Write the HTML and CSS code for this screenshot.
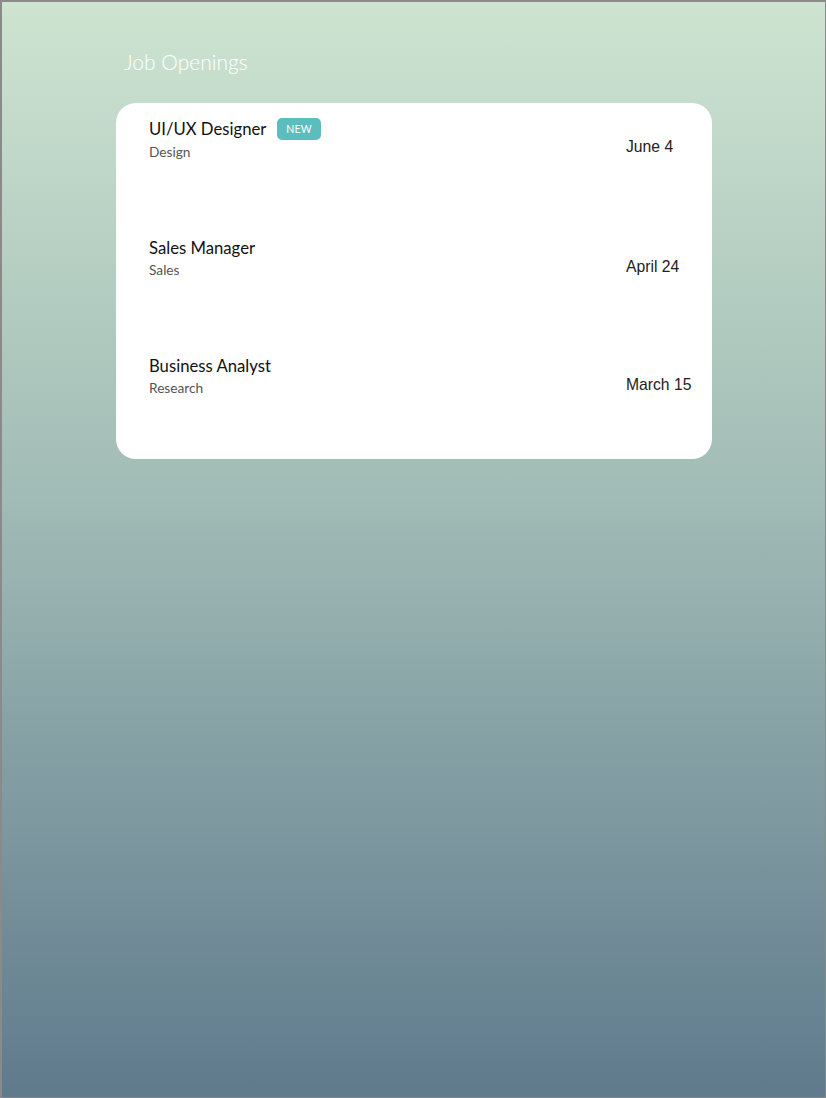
FILE: index.html
```html
<!DOCTYPE html>
<html lang="en">
<head>
<meta charset="utf-8">
<title>Job Openings</title>
<link rel="stylesheet" href="styles.css">
</head>
<body>
<div class="page">
  <h1 class="heading">Job Openings</h1>
  <div class="card">
    <div class="job">
      <div class="job-info">
        <div class="job-title">UI/UX Designer <span class="badge">NEW</span></div>
        <div class="job-dept">Design</div>
      </div>
      <div class="job-date">June 4</div>
    </div>
    <div class="job">
      <div class="job-info">
        <div class="job-title">Sales Manager</div>
        <div class="job-dept">Sales</div>
      </div>
      <div class="job-date">April 24</div>
    </div>
    <div class="job">
      <div class="job-info">
        <div class="job-title">Business Analyst</div>
        <div class="job-dept">Research</div>
      </div>
      <div class="job-date">March 15</div>
    </div>
  </div>
</div>
</body>
</html>
```
FILE: styles.css
```css
html, body {
  margin: 0;
  padding: 0;
}
body {
  font-family: Lato, "Open Sans", sans-serif;
}
.page {
  box-sizing: border-box;
  width: 826px;
  height: 1098px;
  border-top: 2px solid #8a8a8a;
  border-left: 2px solid #8a8a8a;
  border-right: 1px solid #8a8a8a;
  border-bottom: 1px solid #8a8a8a;
  background: linear-gradient(180deg, #cee4d1 0%, #a1bcb6 45%, #5f7a8c 100%);
  padding: 47px 0 0 114px;
}
.heading {
  margin: 0 0 28px 8px;
  font-weight: 300;
  font-size: 21px;
  line-height: 26px;
  color: #ffffff;
}
.card {
  width: 596px;
  box-sizing: border-box;
  background: #ffffff;
  border-radius: 20px;
  padding: 15px 20px 63px 33px;
  display: flex;
  flex-direction: column;
  gap: 78px;
}
.job {
  display: flex;
  justify-content: space-between;
  align-items: flex-start;
}
.job-title {
  font-size: 16.7px;
  line-height: 20px;
  color: #111111;
  display: flex;
  align-items: center;
}
.badge {
  margin-left: 11px;
  display: inline-block;
  background: #5bbdbd;
  color: #ffffff;
  font-size: 10.5px;
  font-weight: 400;
  line-height: 22px;
  height: 22px;
  padding: 0 9px;
  border-radius: 5px;
  letter-spacing: 0.2px;
}
.job-dept {
  margin-top: 4px;
  font-size: 13.7px;
  line-height: 16px;
  color: #555555;
}
.job-date {
  width: 66px;
  margin-top: 20px;
  font-family: "Liberation Sans", Arial, sans-serif;
  font-size: 15.7px;
  line-height: 18px;
  color: #222222;
}
```
